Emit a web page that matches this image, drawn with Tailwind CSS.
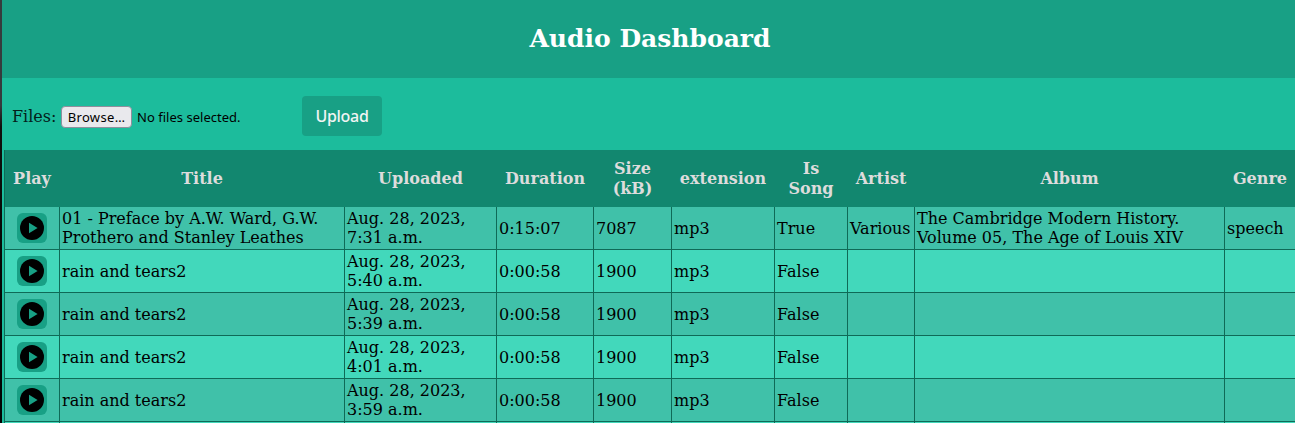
<!DOCTYPE html>
<html lang="en">
<head>
<meta charset="utf-8">
<title>Audio Dashboard</title>
<script src="https://cdn.jsdelivr.net/npm/@tailwindcss/browser@4"></script>
</head>
<body class="flex h-[423px] w-[1295px] overflow-hidden bg-[#1cbc9c] font-['DejaVu_Serif',serif] text-base text-black">
<div class="w-[2px] shrink-0 bg-linear-to-b from-[#353b3d] from-25% via-[#10100e] via-30% to-[#020403] to-80%"></div>
<div class="flex h-[423px] w-[1293px] shrink-0 flex-col overflow-hidden">
  <header class="flex h-[78px] shrink-0 items-center justify-center bg-[#18a085] pb-px pl-[3px]">
    <h1 class="text-[25px] leading-8 font-bold text-white">Audio Dashboard</h1>
  </header>
  <form class="flex h-[72px] shrink-0 items-center pt-1 pl-[10px]">
    <label class="w-[49px] shrink-0 pt-px leading-5 text-[#04201a]">Files:</label>
    <button type="button" class="mt-[2px] flex h-[22px] w-[71px] items-center justify-center rounded-[4px] border border-[#8f8f9d] bg-[#e9e9ed] pt-px font-['Noto_Sans',sans-serif] text-[13px] tracking-[0.35px] whitespace-nowrap text-black">Browse…</button>
    <span class="mt-[3px] ml-[5px] w-[165px] font-['Noto_Sans',sans-serif] text-[13px] tracking-[0.02px] whitespace-nowrap">No files selected.</span>
    <button type="button" class="flex h-10 w-20 items-center justify-center rounded-[4px] bg-[#18a085] font-['Noto_Sans',sans-serif] text-base font-medium tracking-[-0.3px] text-[#f1f4f3]">Upload</button>
  </form>
  <div id="table" class="ml-[2px] min-h-0 w-[1292px] flex-1 overflow-hidden border-l border-[#0f6a57]">
    <div class="grid h-[57px] grid-cols-[55px_285px_152px_97px_78px_103px_73px_67px_310px_71px] items-center bg-[#12876f] text-center leading-5 font-bold text-[#dddcdc] *:pr-px">
      <div>Play</div><div>Title</div><div>Uploaded</div><div>Duration</div><div>Size<br>(kB)</div><div>extension</div><div>Is<br>Song</div><div>Artist</div><div>Album</div><div>Genre</div>
    </div>
  </div>
</div>
<template id="row">
  <div class="grid h-[43px] grid-cols-[55px_285px_152px_97px_78px_103px_73px_67px_310px_71px] leading-[19px] odd:bg-[#42d8bb] even:bg-[#40c1a9]">
    <div class="flex items-center justify-center border-r border-b border-[#0f6a57]">
      <button type="button" aria-label="Play" class="flex size-[30px] items-center justify-center rounded-[6px] bg-[#18a085]">
        <svg class="size-6" viewBox="0 0 24 24"><circle cx="12" cy="12" r="12" fill="#000"/><path d="M9 6.8v10.4l8.6-5.2z" fill="#18a085"/></svg>
      </button>
    </div>
  </div>
</template>
<template id="cell"><div class="flex items-center border-r border-b border-[#0f6a57] pl-[2px] whitespace-pre"></div></template>
<script>
const rows = [
  ['01 - Preface by A.W. Ward, G.W.\nProthero and Stanley Leathes','Aug. 28, 2023,\n7:31 a.m.','0:15:07','7087','mp3','True','Various','The Cambridge Modern History.\nVolume 05, The Age of Louis XIV','speech'],
  ...['5:40','5:39','4:01','3:59'].map(t => ['rain and tears2','Aug. 28, 2023,\n' + t + ' a.m.','0:00:58','1900','mp3','False','','','']),
  ['','','','','','','','','']
];
const table = document.getElementById('table');
for (const r of rows) {
  const row = document.getElementById('row').content.firstElementChild.cloneNode(true);
  for (const text of r) {
    const cell = document.getElementById('cell').content.firstElementChild.cloneNode(true);
    cell.textContent = text;
    row.append(cell);
  }
  table.append(row);
}
</script>
</body>
</html>
